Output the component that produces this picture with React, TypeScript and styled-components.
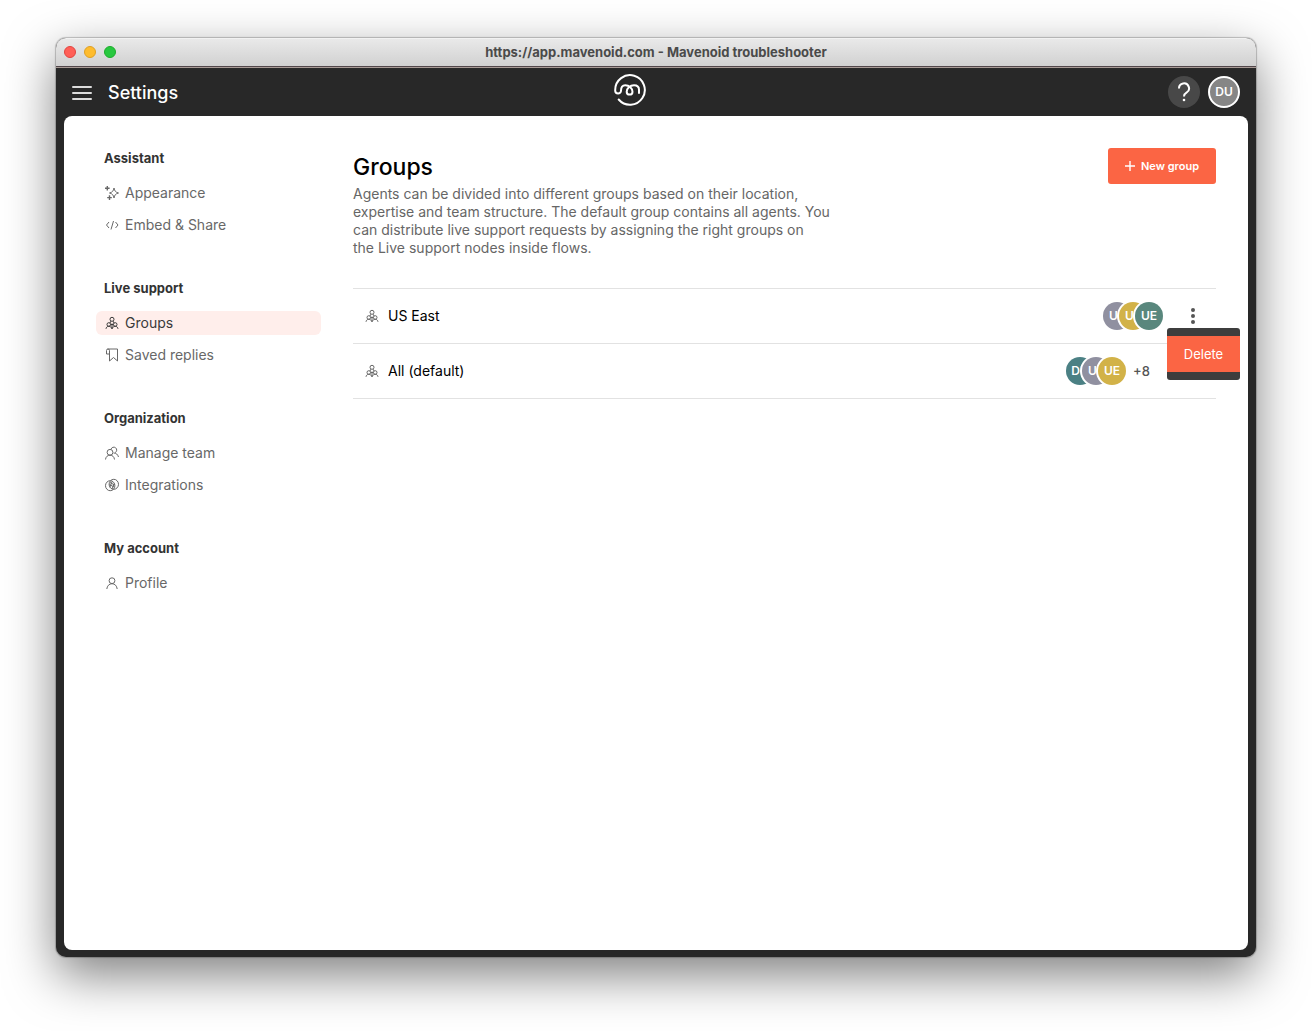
import React, { useState } from "react";
import styled, { createGlobalStyle } from "styled-components";

const GlobalStyle = createGlobalStyle`
  *, *::before, *::after { box-sizing: border-box; }
  body {
    margin: 0;
    background: #fff;
    font-family: Inter, "Liberation Sans", sans-serif;
    font-size: 14px;
    line-height: 18px;
    color: #666;
  }
  button { font: inherit; border: 0; padding: 0; cursor: pointer; }
  ul { list-style: none; margin: 0; padding: 0; }
  h1, h2, h3, p { margin: 0; }
`;

const Desktop = styled.div`
  display: flex;
  min-height: 100vh;
  padding: 38px 56px 74px;
`;

const AppWindow = styled.div`
  flex: 1;
  display: flex;
  flex-direction: column;
  min-width: 0;
  border-radius: 10px;
  background: #282828;
  box-shadow: 0 0 1px 1px rgba(0, 0, 0, 0.22), 0 18px 50px rgba(0, 0, 0, 0.5);
`;

const TitleBar = styled.div`
  display: grid;
  grid-template-columns: 1fr auto 1fr;
  align-items: center;
  height: 30px;
  padding: 0 8px 2px;
  border-radius: 10px 10px 0 0;
  border-top: 1px solid #f2f2f2;
  border-bottom: 1px solid #a89a95;
  background: linear-gradient(#e9e9e9, #d0d0d0);
  box-shadow: inset 0 -1px 0 #51464a;
`;

const Lights = styled.div`
  display: flex;
  gap: 8px;
`;

const Light = styled.span<{ $fill: string; $edge: string }>`
  width: 12px;
  height: 12px;
  border-radius: 50%;
  background: ${(p) => p.$fill};
  border: 1px solid ${(p) => p.$edge};
`;

const WindowTitle = styled.div`
  font-size: 13px;
  font-weight: 700;
  color: #4a4a4a;
`;

const Header = styled.header`
  display: grid;
  grid-template-columns: 1fr auto 1fr;
  align-items: center;
  height: 48px;
  padding: 0 16px;
  color: #fff;
`;

const HeaderSide = styled.div<{ $end?: boolean }>`
  display: flex;
  align-items: center;
  justify-content: ${(p) => (p.$end ? "flex-end" : "flex-start")};
  gap: ${(p) => (p.$end ? 8 : 16)}px;
`;

const MenuButton = styled.button`
  display: flex;
  flex-direction: column;
  justify-content: center;
  gap: 4px;
  width: 20px;
  height: 24px;
  padding-top: 2px;
  background: none;
`;

const MenuLine = styled.span`
  height: 2px;
  border-radius: 1px;
  background: #dcdcdc;
`;

const HeaderTitle = styled.div`
  padding-top: 2px;
  font-size: 18px;
  line-height: 24px;
  font-weight: 500;
`;

const LogoMark = styled.svg`
  display: block;
  margin: 0 52px 4px 0;
`;

const RoundButton = styled.button<{ $user?: boolean }>`
  display: flex;
  align-items: center;
  justify-content: center;
  width: 32px;
  height: 32px;
  border-radius: 50%;
  color: #fff;
  font-size: 12px;
  font-weight: 600;
  background: ${(p) => (p.$user ? "#868686" : "#484848")};
  border: ${(p) => (p.$user ? "2px solid #fff" : "0")};
`;

const Panel = styled.div`
  flex: 1;
  display: flex;
  gap: 32px;
  margin: 0 8px 7px;
  padding: 30px 32px;
  border-radius: 8px;
  background: #fff;
`;

const Sidebar = styled.nav`
  display: flex;
  flex-direction: column;
  gap: 39px;
  flex: 0 0 225px;
`;

const NavHeading = styled.h2`
  margin-bottom: 11px;
  padding: 0 8px;
  font-size: 13px;
  line-height: 24px;
  font-weight: 700;
  color: #333;
`;

const NavList = styled.ul`
  display: flex;
  flex-direction: column;
  gap: 8px;
`;

const NavLink = styled.a<{ $active?: boolean }>`
  display: flex;
  align-items: center;
  gap: 5px;
  height: 24px;
  padding: 0 8px;
  border-radius: 6px;
  text-decoration: none;
  color: ${(p) => (p.$active ? "#3a3a3a" : "#686868")};
  background: ${(p) => (p.$active ? "#ffeeeb" : "transparent")};
`;

const Main = styled.main`
  flex: 1;
  min-width: 0;
`;

const PageHead = styled.div`
  display: flex;
  align-items: flex-start;
  justify-content: space-between;
  padding: 2px 0 31px;
`;

const Intro = styled.div`
  max-width: 484px;
  padding-top: 1px;
`;

const PageTitle = styled.h1`
  font-size: 23px;
  line-height: 36px;
  font-weight: 500;
  color: #000;
`;

const NewButton = styled.button`
  display: flex;
  align-items: center;
  justify-content: center;
  gap: 6px;
  height: 36px;
  width: 108px;
  border-radius: 3px;
  background: #fb6544;
  color: #fff;
  font-size: 11px;
  font-weight: 600;
`;

const GroupList = styled.ul`
  border-top: 1px solid #e2e2e2;
`;

const GroupRow = styled.li`
  display: flex;
  align-items: center;
  height: 55px;
  padding: 0 11px;
  border-bottom: 1px solid #e2e2e2;
`;

const GroupName = styled.h3`
  flex: 1;
  margin-left: 8px;
  font-size: 14px;
  font-weight: 400;
  color: #000;
`;

const Avatars = styled.div`
  display: flex;
  margin-right: 7px;
`;

const Avatar = styled.span<{ $color: string }>`
  display: flex;
  align-items: center;
  justify-content: center;
  width: 28px;
  height: 28px;
  border-radius: 50%;
  box-shadow: 0 0 0 2px #fff;
  background: ${(p) => p.$color};
  color: #fff;
  font-size: 12px;
  font-weight: 600;

  & + & { margin-left: -12px; }
`;

const More = styled.span`
  width: 72px;
  font-size: 13px;
  font-weight: 500;
  color: #555;
`;

const Actions = styled.div`
  position: relative;
  margin-left: 11px;
`;

const KebabButton = styled.button`
  display: flex;
  align-items: center;
  justify-content: center;
  width: 24px;
  height: 24px;
  background: none;
`;

const Menu = styled.div`
  position: absolute;
  z-index: 1;
  top: 100%;
  right: -35px;
  padding: 8px 0;
  border-radius: 3px;
  background: #3d3d3d;
`;

const MenuItem = styled.button`
  display: block;
  height: 36px;
  width: 73px;
  background: #fb6544;
  color: #fff;
  font-size: 13px;
`;

type IconName = "sparkles" | "code" | "groups" | "saved" | "team" | "links" | "person";

const shapes: Record<IconName, React.ReactNode> = {
  sparkles: (
    <>
      <path d="M10 3c.6 3 1.500 4.200 4.500 5-3 .8-3.900 2-4.500 5-.6-3-1.500-4.200-4.500-5 3-.8 3.900-2 4.500-5Z" />
      <path d="M3.300 1v4.600M1 3.300h4.600M5.500 10.300v4.600M3.200 12.600h4.600" strokeWidth="1.400" />
    </>
  ),
  code: <path d="M5 5 2.500 8 5 11M11.500 5 14 8l-2.500 3M9.500 4l-2.500 8.500" />,
  groups: (
    <>
      <circle cx="8" cy="4.300" r="2" />
      <circle cx="4.800" cy="9.500" r="1.800" />
      <circle cx="11.200" cy="9.500" r="1.800" />
      <path d="M6.800 6.200 6 8M9.200 6.200 10 8M2 13.800c.2-1.600 1.300-2.500 2.800-2.500s2.600.9 3.200 2.500c.6-1.600 1.700-2.500 3.200-2.500s2.600.9 2.800 2.500M8 8.500v5.300M6.500 9.500h3" />
    </>
  ),
  saved: <path d="M4.500 2h9v12L9.500 10.500 5.500 14V3.500A1.500 1.500 0 0 0 2.500 3.500V7H5.500M4.500 2h-1" />,
  team: (
    <>
      <circle cx="6" cy="7.300" r="2.900" />
      <path d="M1.500 14.500c.3-2.700 2-4.300 4.500-4.300s4.200 1.600 4.500 4.300M7 4.300a2.900 2.900 0 1 1 4.200 3.300M9.500 8c2.500-.2 4.300 1.500 5 4" />
    </>
  ),
  links: (
    <>
      <ellipse cx="6.200" cy="8.700" rx="4.700" ry="5" />
      <ellipse cx="9.800" cy="7.300" rx="4.700" ry="5" />
      <path d="M6 5.500 10.700 8M5.400 7.500l5 2.700M8 4.800 5.800 10.300M10.300 6.500 8 12" />
    </>
  ),
  person: (
    <>
      <circle cx="8" cy="5.700" r="2.900" />
      <path d="M2.800 14c.4-3.200 2.400-5.300 5.200-5.300s4.800 2.100 5.200 5.300" />
    </>
  ),
};

function Icon({ name }: { name: IconName }) {
  return (
    <svg width="16" height="16" viewBox="0 0 16 16" fill="none" stroke="currentColor" strokeWidth="1" aria-hidden="true">
      {shapes[name]}
    </svg>
  );
}

const sections: { title: string; items: { label: string; icon: IconName; active?: boolean }[] }[] = [
  {
    title: "Assistant",
    items: [
      { label: "Appearance", icon: "sparkles" },
      { label: "Embed & Share", icon: "code" },
    ],
  },
  {
    title: "Live support",
    items: [
      { label: "Groups", icon: "groups", active: true },
      { label: "Saved replies", icon: "saved" },
    ],
  },
  {
    title: "Organization",
    items: [
      { label: "Manage team", icon: "team" },
      { label: "Integrations", icon: "links" },
    ],
  },
  { title: "My account", items: [{ label: "Profile", icon: "person" }] },
];

const groups = [
  {
    name: "US East",
    members: [
      { initials: "UE", color: "#9090a0" },
      { initials: "UE", color: "#d2b248" },
      { initials: "UE", color: "#59877d" },
    ],
    more: 0,
  },
  {
    name: "All (default)",
    members: [
      { initials: "DU", color: "#4b8084" },
      { initials: "UE", color: "#9090a0" },
      { initials: "UE", color: "#d2b248" },
    ],
    more: 8,
  },
];

export default function App() {
  const [menuOpen, setMenuOpen] = useState(true);
  return (
    <>
      <GlobalStyle />
      <Desktop>
        <AppWindow>
          <TitleBar>
            <Lights>
              <Light $fill="#ff5f57" $edge="#e2443f" />
              <Light $fill="#febc2e" $edge="#dfa023" />
              <Light $fill="#28c840" $edge="#1dad2b" />
            </Lights>
            <WindowTitle>https://app.mavenoid.com - Mavenoid troubleshooter</WindowTitle>
          </TitleBar>
          <Header>
            <HeaderSide>
              <MenuButton aria-label="Menu">
                <MenuLine />
                <MenuLine />
                <MenuLine />
              </MenuButton>
              <HeaderTitle>Settings</HeaderTitle>
            </HeaderSide>
            <LogoMark width="32" height="32" viewBox="0 0 32 32" fill="none" stroke="#fff" strokeWidth="2" strokeLinecap="round" strokeLinejoin="round" aria-hidden="true">
              <path d="M4.700 25.500A14.800 14.800 0 1 0 1.200 16v.7c0 3.600 5.800 3.600 5.800 0C7 13.200 8.500 11.200 11.200 11.200c4 0 7.300 3 7.300 6.500a2.900 2.900 0 0 1-5.800 0C12.700 14.200 16 11.200 20 11.200c3 0 5 1.800 5 4.500V19" />
            </LogoMark>
            <HeaderSide $end>
              <RoundButton aria-label="Help">
                <svg width="14" height="20" viewBox="0 0 14 20" fill="none" stroke="#fff" strokeWidth="2" aria-hidden="true">
                  <path d="M2 6.500a5 5 0 1 1 7.500 4.200C7.700 11.700 7 12.500 7 14.500" />
                  <circle cx="7" cy="18" r="1.300" fill="#fff" stroke="none" />
                </svg>
              </RoundButton>
              <RoundButton $user>DU</RoundButton>
            </HeaderSide>
          </Header>
          <Panel>
            <Sidebar>
              {sections.map((section) => (
                <section key={section.title}>
                  <NavHeading>{section.title}</NavHeading>
                  <NavList>
                    {section.items.map((item) => (
                      <li key={item.label}>
                        <NavLink href="#" $active={item.active}>
                          <Icon name={item.icon} />
                          {item.label}
                        </NavLink>
                      </li>
                    ))}
                  </NavList>
                </section>
              ))}
            </Sidebar>
            <Main>
              <PageHead>
                <Intro>
                  <PageTitle>Groups</PageTitle>
                  <p>
                    Agents can be divided into different groups based on their location, expertise and team structure.
                    The default group contains all agents. You can distribute live support requests by assigning the
                    right groups on the&nbsp;Live support nodes inside flows.
                  </p>
                </Intro>
                <NewButton>
                  <svg width="10" height="10" viewBox="0 0 10 10" stroke="currentColor" strokeWidth="1.400" aria-hidden="true">
                    <path d="M5 0v10M0 5h10" />
                  </svg>
                  New group
                </NewButton>
              </PageHead>
              <GroupList>
                {groups.map((group) => (
                  <GroupRow key={group.name}>
                    <Icon name="groups" />
                    <GroupName>{group.name}</GroupName>
                    <Avatars>
                      {group.members.map((m, i) => (
                        <Avatar key={i} $color={m.color}>
                          {m.initials}
                        </Avatar>
                      ))}
                    </Avatars>
                    {group.more > 0 ? (
                      <More>+{group.more}</More>
                    ) : (
                      <Actions>
                        <KebabButton aria-label="Group actions" onClick={() => setMenuOpen(!menuOpen)}>
                          <svg width="4" height="16" viewBox="0 0 4 16" fill="#555" aria-hidden="true">
                            <circle cx="2" cy="2" r="2" />
                            <circle cx="2" cy="8" r="2" />
                            <circle cx="2" cy="14" r="2" />
                          </svg>
                        </KebabButton>
                        {menuOpen && (
                          <Menu>
                            <MenuItem>Delete</MenuItem>
                          </Menu>
                        )}
                      </Actions>
                    )}
                  </GroupRow>
                ))}
              </GroupList>
            </Main>
          </Panel>
        </AppWindow>
      </Desktop>
    </>
  );
}
